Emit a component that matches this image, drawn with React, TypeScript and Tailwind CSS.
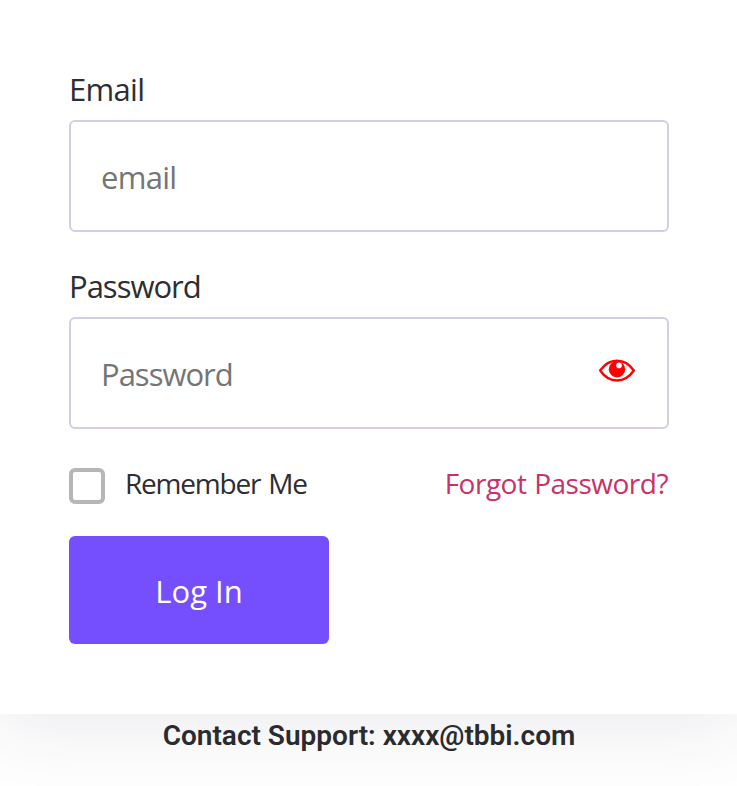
export default function App() {
  return (
    <div className="h-[786px] w-[737px] overflow-hidden bg-[#fefefe] font-['Open_Sans',sans-serif] text-[#2d2d32]">
      <main className="h-[714px] bg-white px-[69px] pt-[69px] shadow-[0_10px_68px_4px_rgba(50,50,93,0.085)]">
        <label className="block h-[51px] text-[31px] leading-[40px] tracking-[-0.7px]">Email</label>
        <input placeholder="email" className="block h-28 w-[600px] rounded-md border-2 border-[#d1cfe6] px-[30px] pt-px text-[31px] tracking-[-0.7px] placeholder:text-[#757575]" />
        <label className="mt-[34px] block h-[51px] text-[31px] leading-[40px] tracking-[-1px]">Password</label>
        <div className="flex h-28 w-[600px] items-center justify-between rounded-md border-2 border-[#d1cfe6] pr-8 pl-[30px]">
          <input placeholder="Password" className="w-[300px] pt-[3px] text-[31px] tracking-[-1px] placeholder:text-[#757575]" />
          <svg className="-mt-1.5 h-9 w-9" viewBox="0 0 36 36" fill="none">
            <path d="M1.2 18.5Q8 8.7 18 8.7T34.8 18.5Q28 28.5 18 28.5T1.2 18.5Z" stroke="red" strokeWidth="2.4" />
            <circle cx="18" cy="17.3" r="8.2" fill="red" />
            <circle cx="20" cy="13.4" r="2.8" fill="white" />
          </svg>
        </div>
        <div className="mt-[39px] flex h-9 items-center">
          <span className="h-9 w-9 rounded-md border-4 border-[#b6b6b6]" />
          <span className="-mt-[7px] ml-5 text-[28px] leading-9 tracking-[-1.2px] [word-spacing:2px]">Remember Me</span>
          <a className="-mt-1.5 ml-auto text-[28px] leading-9 tracking-[-0.5px] [word-spacing:1px] text-[#cb3066]">Forgot Password?</a>
        </div>
        <button className="mt-8 h-[108px] w-[260px] rounded-md bg-[#754ffe] pt-[3px] text-[31px] text-white">Log In</button>
      </main>
      <p className="pl-px text-center font-[Roboto,sans-serif] text-[28px] leading-[44px] font-semibold text-[#2b2b2e]">Contact Support: xxxx@tbbi.com</p>
    </div>
  )
}
